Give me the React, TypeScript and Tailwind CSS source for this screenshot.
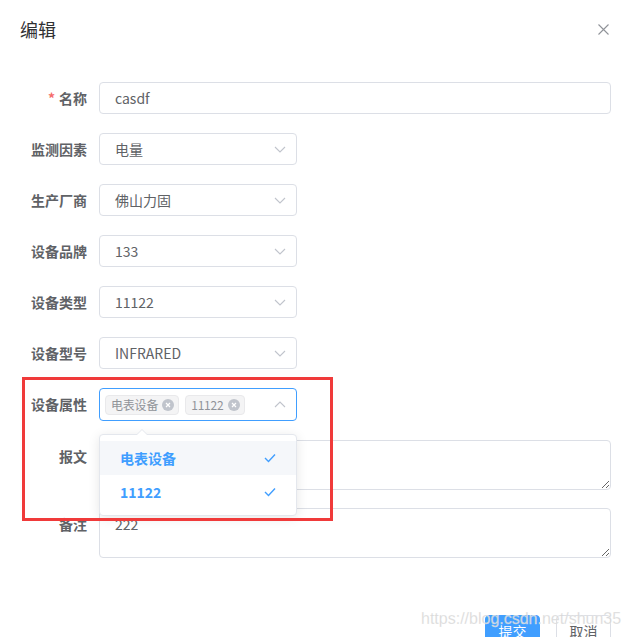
import React from "react";

const FONT = { fontFamily: '"Noto Sans CJK SC", "Noto Sans", sans-serif' };

function Chevron({ up = false }: { up?: boolean }) {
  return (
    <svg width="12" height="7" viewBox="0 0 12 7" className="shrink-0">
      <path
        d={up ? "M1 6 L6 1 L11 6" : "M1 1 L6 6 L11 1"}
        fill="none"
        stroke="#C0C4CC"
        strokeWidth="1.1"
      />
    </svg>
  );
}

function Label({ text, required = false }: { text: string; required?: boolean }) {
  return (
    <div className="w-[80px] shrink-0 pr-3 text-right text-sm leading-8 font-bold text-[#606266]">
      {required && <span className="mr-1 text-[#F56C6C]">*</span>}
      {text}
    </div>
  );
}

function SelectBox({ value }: { value: string }) {
  return (
    <div className="flex h-8 w-[198px] items-center justify-between rounded border border-[#DCDFE6] bg-white pl-[15px] pr-[10px] text-sm text-[#606266]">
      <span>{value}</span>
      <Chevron />
    </div>
  );
}

function Tag({ text }: { text: string }) {
  return (
    <div className="flex h-[20px] items-center gap-[4px] rounded-[4px] border border-[#e9e9eb] bg-[#f4f4f5] pl-[5px] pr-[4px] text-xs tracking-[-0.2px] text-[#909399]">
      <span>{text}</span>
      <span className="flex h-3 w-3 items-center justify-center rounded-full bg-[#C0C4CC]">
        <svg width="6" height="6" viewBox="0 0 6 6">
          <path d="M1 1 L5 5 M5 1 L1 5" stroke="#fff" strokeWidth="1.2" />
        </svg>
      </span>
    </div>
  );
}

function Check() {
  return (
    <svg width="12" height="10" viewBox="0 0 12 10">
      <path d="M1 5 L4.5 8.5 L11 1.5" fill="none" stroke="#409EFF" strokeWidth="1.4" />
    </svg>
  );
}

export default function App() {
  return (
    <div className="relative h-[637px] w-[628px] overflow-hidden bg-white" style={FONT}>
      {/* header */}
      <div className="flex items-center justify-between pl-5 pr-[19px] pt-[17px]">
        <span className="text-lg leading-6 text-[#303133]">编辑</span>
        <svg width="11" height="11" viewBox="0 0 11 11">
          <path d="M0.5 0.5 L10.5 10.5 M10.5 0.5 L0.5 10.5" stroke="#909399" strokeWidth="1.1" />
        </svg>
      </div>

      {/* body */}
      <div className="mt-[41px] flex flex-col gap-[19px] pl-[19px] pr-[17px]">
        <div className="flex">
          <Label text="名称" required />
          <div className="flex h-8 flex-1 items-center rounded border border-[#DCDFE6] px-[15px] text-sm text-[#606266]">
            casdf
          </div>
        </div>
        <div className="flex">
          <Label text="监测因素" />
          <SelectBox value="电量" />
        </div>
        <div className="flex">
          <Label text="生产厂商" />
          <SelectBox value="佛山力固" />
        </div>
        <div className="flex">
          <Label text="设备品牌" />
          <SelectBox value="133" />
        </div>
        <div className="flex">
          <Label text="设备类型" />
          <SelectBox value="11122" />
        </div>
        <div className="flex">
          <Label text="设备型号" />
          <SelectBox value="INFRARED" />
        </div>
        <div className="flex">
          <Label text="设备属性" />
          <div className="relative">
            <div className="flex h-[33px] w-[198px] items-center justify-between rounded border border-[#409EFF] bg-white pl-[5px] pr-[10px]">
              <div className="flex items-center gap-[6px]">
                <Tag text="电表设备" />
                <Tag text="11122" />
              </div>
              <Chevron up />
            </div>
            {/* dropdown */}
            <div className="absolute left-0 top-[46px] z-10 w-[198px] rounded border border-[#E4E7ED] bg-white py-[6px] shadow-[0_2px_12px_0_rgba(0,0,0,0.1)]">
              <div className="absolute -top-[6px] left-[36px] h-0 w-0 border-x-[6px] border-b-[6px] border-x-transparent border-b-[#E4E7ED]" />
              <div className="absolute -top-[5px] left-[37px] h-0 w-0 border-x-[5px] border-b-[5px] border-x-transparent border-b-white" />
              <div className="flex h-[34px] items-center justify-between bg-[#F5F7FA] pl-5 pr-5 text-sm font-bold text-[#409EFF]">
                <span>电表设备</span>
                <Check />
              </div>
              <div className="flex h-[34px] items-center justify-between pl-5 pr-5 text-sm font-bold text-[#409EFF]">
                <span>11122</span>
                <Check />
              </div>
            </div>
          </div>
        </div>
        <div className="flex">
          <Label text="报文" />
          <textarea
            readOnly
            className="h-[50px] flex-1 resize-y rounded border border-[#DCDFE6] px-[15px] py-[5px] text-sm text-[#606266] outline-none"
            style={FONT}
          />
        </div>
        <div className="-mt-[1px] flex">
          <Label text="备注" />
          <textarea
            readOnly
            value="222"
            className="h-[50px] flex-1 resize-y rounded border border-[#DCDFE6] px-[15px] py-[5px] text-sm leading-[21px] text-[#606266] outline-none"
            style={FONT}
          />
        </div>
      </div>

      {/* footer */}
      <div className="mt-[57px] flex justify-end gap-4 pr-[17px]">
        <div className="flex h-8 w-[55px] items-center justify-center rounded border border-[#409EFF] bg-[#409EFF] text-sm text-white">
          提交
        </div>
        <div className="flex h-8 w-[55px] items-center justify-center rounded border border-[#DCDFE6] bg-white text-sm text-[#606266]">
          取消
        </div>
      </div>

      {/* annotation red box */}
      <div className="pointer-events-none absolute left-[22px] top-[377px] z-20 h-[144px] w-[311px] border-[3px] border-[#f03a3a]" />

      {/* watermark */}
      <div
        className="pointer-events-none absolute left-[421px] top-[609px] z-30 text-[16px] leading-5 text-[#d6d6d6] opacity-90"
        style={{ fontFamily: '"Liberation Sans", Arial, sans-serif', WebkitTextStroke: "0.3px rgba(255,255,255,0.6)" }}
      >
        https://blog.csdn.net/shun35
      </div>
    </div>
  );
}
